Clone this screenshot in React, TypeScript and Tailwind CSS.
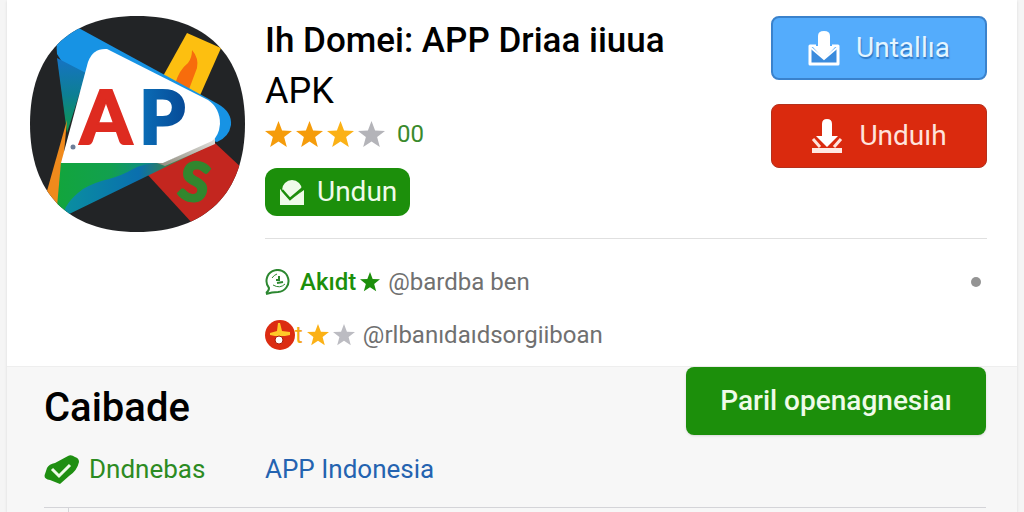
import type { ReactNode } from "react";

const ratingColors = ["text-[#f59c0b]", "text-[#f59c0b]", "text-[#fbb116]", "text-[#b4b4b9]"];

function SolidStar({ className }: { className: string }) {
  return (
    <svg viewBox="0 0 24 24" fill="currentColor" className={className} aria-hidden="true">
      <path d="M12 0l3.2 8.500 8.800.3-7 5.500 2.400 8.900-7.400-5-7.400 5L7 14.300l-7-5.500 8.800-.3z" />
    </svg>
  );
}

function AppLogo() {
  return (
    <svg viewBox="0 0 215 216" className="h-[216px] w-[215px] shrink-0" role="img" aria-label="AP">
      <defs>
        <clipPath id="squircle">
          <path d="M107 0C176 0 215 39 215 108S176 216 107 216 0 177 0 108 38 0 107 0Z" />
        </clipPath>
        <linearGradient id="side" x1="0" y1="0" x2="0" y2="1">
          <stop offset="0" stopColor="#1673c4" />
          <stop offset="0.5" stopColor="#0d7f93" />
          <stop offset="1" stopColor="#0e9a48" />
        </linearGradient>
        <linearGradient id="base" x1="0" y1="0" x2="1" y2="0">
          <stop offset="0" stopColor="#12a53c" />
          <stop offset="0.5" stopColor="#12a04f" />
          <stop offset="1" stopColor="#0e83a0" />
        </linearGradient>
        <linearGradient id="edge" x1="0" y1="0" x2="1" y2="0">
          <stop offset="0" stopColor="#0a8fa0" />
          <stop offset="0.5" stopColor="#0a6fae" />
          <stop offset="0.7" stopColor="#36844a" />
          <stop offset="1" stopColor="#9a9a90" />
        </linearGradient>
        <linearGradient id="rim" x1="0" y1="1" x2="1" y2="0">
          <stop offset="0" stopColor="#8f8a7c" />
          <stop offset="1" stopColor="#e2e2df" />
        </linearGradient>
        <linearGradient id="letter" x1="0" y1="0" x2="1" y2="0">
          <stop offset="0" stopColor="#0b6fb8" />
          <stop offset="1" stopColor="#064a97" />
        </linearGradient>
      </defs>
      <g clipPath="url(#squircle)">
        <rect width="215" height="216" fill="#222426" />
        <path d="M157 17l34 15-23 52-36-22z" fill="#fdbf10" />
        <path d="M162 34q7 8 5 18l-9 24-13-8q4-14 13-21 4-5 4-13z" fill="#f76c0c" />
        <path d="M185 127l30 28v10l-52 43-46-50z" fill="#c3261f" />
        <path d="M27 38Q24 14 45 10L188 88q14 8 13 21-2 12-14 17L60 90z" fill="#1793e4" />
        <path d="M27 42l29 15-19 60z" fill="url(#side)" />
        <path d="M37 104l-22 78 12 16 6-50z" fill="#f08a1c" />
        <path d="M31 146h105L26 202z" fill="url(#base)" />
        <path d="M133 146l52-19L33 201q1-14 20-28 12-7 26-10 14-4 24-10 8-5 30-7z" fill="url(#edge)" />
        <path d="M127 147h6l52-25v6l-50 22z" fill="url(#rim)" />
        <path d="M31 147L58 46q5-14 19-13l101 51q12 8 12 24-1 12-8 17l-49 22z" fill="#fff" />
        <circle cx="43" cy="131" r="2.5" fill="#6d7d98" />
        <g fontFamily="Lato" fontWeight="900" fontSize="74">
          <text x="50" y="128" fill="#de2b20" stroke="#de2b20" strokeWidth="2">A</text>
          <text x="109" y="128" fill="url(#letter)" stroke="url(#letter)" strokeWidth="2">P</text>
          <text x="150" y="186" fontSize="54" fill="#32862e" stroke="#32862e" strokeWidth="2" transform="rotate(12 168 165)">S</text>
        </g>
      </g>
    </svg>
  );
}

function EnvelopeCheck() {
  return (
    <svg viewBox="0 0 26 28" className="h-7 w-[26px]" aria-hidden="true">
      <path d="M3 12a10 10 0 0 1 20 0L12 22z" fill="#effbe9" />
      <path d="M1 11l10 11L25 12v15H1z" fill="#effbe9" />
      <path d="M3 12l8 9L24 10" fill="none" stroke="#1c8d0a" strokeWidth="2.5" />
    </svg>
  );
}

function TrayDownload() {
  return (
    <svg viewBox="0 0 32 36" className="h-9 w-8" aria-hidden="true">
      <path d="M8 16H2v18h28V16h-6" fill="#3a8bdd" stroke="#fff" strokeWidth="3" strokeLinejoin="round" />
      <path d="M2 17l14 12 14-12" fill="#54acfc" stroke="#fff" strokeWidth="2" />
      <path d="M10 6q0-5 6-5t6 5v10h6L16 29 4 16h6z" fill="#fff" />
    </svg>
  );
}

function LineDownload() {
  return (
    <svg viewBox="0 0 32 36" className="h-9 w-8" aria-hidden="true">
      <path d="M11 6q0-5 5-5t5 5v12h6L16 29 5 18h6z" fill="#fff" />
      <path d="M2 21l7 8M30 21l-7 8" stroke="#ffe3dc" strokeWidth="3" />
      <path d="M1 30h30v5H1z" fill="#ffe9e3" />
    </svg>
  );
}

function ChatMark() {
  return (
    <svg viewBox="0 0 27 26" className="h-[26px] w-[27px]" fill="none" stroke="#2c8730" strokeWidth="2" aria-hidden="true">
      <path d="M1 24q3-2 3-5A11 11 0 1 1 13 23q-6 0-12 2" />
      <path d="M7 9q2-3 5-4M8 16q7 4 12-1" strokeWidth="1" />
      <path d="M14 7v4h-3M12 14l6-1" strokeWidth="2" />
    </svg>
  );
}

function RedBadge() {
  return (
    <svg viewBox="0 0 30 30" className="h-[30px] w-[30px]" aria-hidden="true">
      <circle cx="15" cy="15" r="15" fill="#dc2c12" />
      <path d="M13 3h2l2 8 8 1v3l-5 1H10l-5-1v-2l7-2z" fill="#ffc928" />
      <circle cx="14" cy="20" r="4" fill="#fff" stroke="#a91907" strokeWidth="1" />
    </svg>
  );
}

function VerifiedMark() {
  return (
    <svg viewBox="0 0 35 29" className="h-[29px] w-[35px]" aria-hidden="true">
      <path d="M3 13q2-4 8-5L24 1q3-2 7 1 4 1 4 5-2 9-10 14l-9 8-10-4q-7-1-5-6z" fill="#1f8f12" />
      <path d="M8 14l7 7L26 10" fill="none" stroke="#effbe9" strokeWidth="3" />
    </svg>
  );
}

function SourceRow({ children }: { children: ReactNode }) {
  return <div className="flex h-[53px] items-center">{children}</div>;
}

export default function App() {
  return (
    <div className="min-h-screen bg-[#f5f5f5] px-[7px] font-[Roboto,sans-serif]">
      <main className="flex min-h-screen flex-col bg-[#f7f7f7] shadow-sm">
        <section className="border-b border-[#eeeeee] bg-white pt-4 pr-[30px] pb-[5px] pl-[23px]">
          <div className="flex gap-5">
            <AppLogo />
            <div className="min-w-0 flex-1">
              <div className="flex justify-between">
                <div>
                  <h1 className="text-[35px] leading-[50px] font-medium whitespace-nowrap text-black">
                    Ih Domei: APP Driaa iiuua
                  </h1>
                  <p className="text-[36px] leading-[50px] text-black">APK</p>
                  <div className="flex h-9 items-center gap-1">
                    {ratingColors.map((color, i) => (
                      <SolidStar key={i} className={`h-[27px] w-[27px] ${color}`} />
                    ))}
                    <span className="ml-2 text-[24px] text-[#3a8a2c]">00</span>
                  </div>
                  <button
                    type="button"
                    className="mt-4 flex h-12 w-[145px] items-center gap-3 rounded-xl bg-[#1c8f0b] pl-[14px] text-[28px] text-[#effbe9]"
                  >
                    <EnvelopeCheck />
                    Undun
                  </button>
                </div>
                <div className="flex w-[216px] shrink-0 flex-col gap-6">
                  <button
                    type="button"
                    className="flex h-16 items-center justify-center gap-4 rounded-lg border-2 border-[#3a82cc] bg-[#54acfc] text-[28px] text-[#e4f5ff] [text-shadow:1px_2px_1px_#2f78c4]"
                  >
                    <TrayDownload />
                    Untallıa
                  </button>
                  <button
                    type="button"
                    className="flex h-16 items-center justify-center gap-4 rounded-lg border border-[#b5301c] bg-[#da2a0e] text-[28px] text-[#ffe3dc]"
                  >
                    <LineDownload />
                    Unduıh
                  </button>
                </div>
              </div>
              <div className="mt-[22px] border-t border-[#e0e0e0] pt-4">
                <SourceRow>
                  <ChatMark />
                  <span className="ml-2 text-[24px] font-medium text-[#1c8f0b]">Akıdt</span>
                  <SolidStar className="ml-1 h-5 w-5 text-[#1c8f0b]" />
                  <span className="ml-2 text-[24px] text-[#707070]">@bardba ben</span>
                  <span className="mr-[6px] ml-auto h-[10px] w-[10px] rounded-full bg-[#949494]" />
                </SourceRow>
                <SourceRow>
                  <RedBadge />
                  <span className="text-[24px] text-[#f5ab16]">t</span>
                  <SolidStar className="ml-1 h-[22px] w-[22px] text-[#fbb116]" />
                  <SolidStar className="ml-1 h-[22px] w-[22px] text-[#bcbcc2]" />
                  <span className="ml-2 text-[24px] text-[#707070]">@rlbanıdaıdsorgiiboan</span>
                </SourceRow>
              </div>
            </div>
          </div>
        </section>

        <section className="flex-1 pr-[31px] pl-[37px]">
          <div className="flex items-start justify-between">
            <h2 className="pt-4 text-[40px] leading-[50px] font-medium text-black">Caibade</h2>
            <button
              type="button"
              className="h-[68px] w-[300px] rounded-lg bg-[#1c8f0b] text-[28px] font-medium text-[#effbe9] shadow-sm"
            >
              Paril openagnesiaı
            </button>
          </div>
          <div className="mt-4 flex h-9 items-center">
            <div className="flex w-[221px] items-center gap-[10px] text-[26px] text-[#2c8b22]">
              <VerifiedMark />
              Dndnebas
            </div>
            <a href="#indonesia" className="text-[26px] text-[#2463b0]">
              APP Indonesia
            </a>
          </div>
          <div className="mt-5 border-t border-[#d4d4d8] pl-6">
            <div className="h-1 border-l border-[#d4d4d8]" />
          </div>
        </section>
      </main>
    </div>
  );
}
